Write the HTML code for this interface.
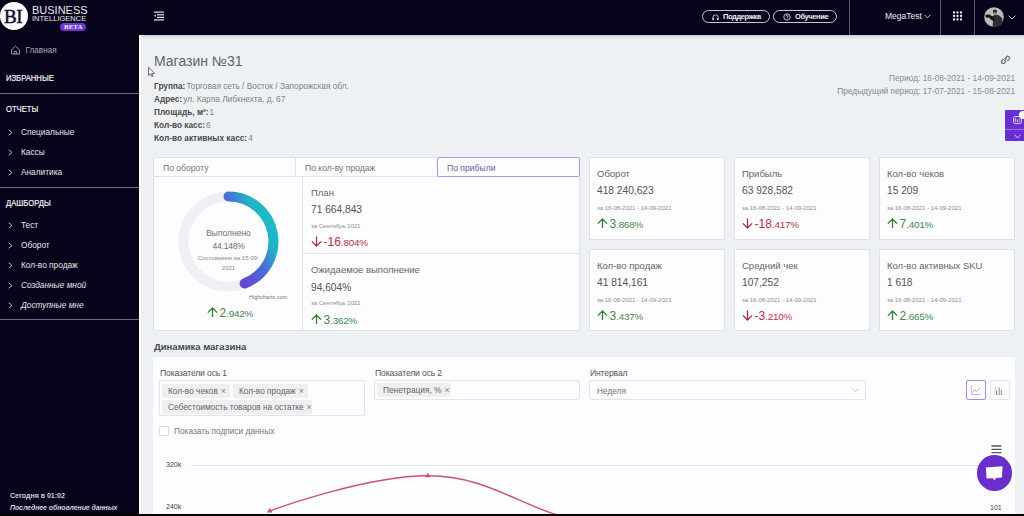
<!DOCTYPE html>
<html><head><meta charset="utf-8">
<style>
*{margin:0;padding:0;box-sizing:border-box}
html,body{width:1024px;height:516px;overflow:hidden}
body{position:relative;background:#eef1f4;font-family:"Liberation Sans",sans-serif;color:#555}
.a{position:absolute;white-space:nowrap;line-height:1}
#side{position:absolute;left:0;top:0;width:139px;height:516px;background:#07031a}
#side .edge{position:absolute;left:138px;top:35px;width:1px;height:481px;background:#010006}
#top{position:absolute;left:0;top:0;width:1024px;height:35px;background:#07031a}
#shadow{position:absolute;left:139px;top:35px;width:885px;height:6px;background:linear-gradient(#cfd1d4,#e7e9ec 50%,#eef1f4)}
#wstrip{position:absolute;left:139px;top:35px;width:2px;height:481px;background:#fbfbfc}
#bottom{position:absolute;left:0;top:514px;width:1024px;height:2px;background:#000}
.sb{color:#f2f0f6;-webkit-text-stroke:0.2px #f2f0f6;font-size:8.5px;transform:scaleX(0.9);transform-origin:0 0}
.si{color:#e6e3ea;font-size:8.3px}
.chev{position:absolute;width:4px;height:4px;border-right:1px solid #d8d4de;border-top:1px solid #d8d4de;transform:rotate(45deg)}
.hr{position:absolute;left:0;width:139px;height:1px;background:#6f6a7a}
.card{position:absolute;background:#fdfcfe;border:1px solid #e2e2e6}
.ttl{font-size:9.5px;color:#666}
.val{font-size:10.2px;color:#535353}
.per{font-size:6px;color:#8c8c8c}
.grn{color:#45884a}
.grn svg{color:#2e7d32}
.red svg{color:#a82a44}
.red{color:#b8304a}
.pill{position:absolute;height:13px;border:1px solid #c9c6d0;border-radius:7px}
.info{left:154px;font-size:8.3px;color:#818181}
.info b{color:#4a4a4a;margin-right:1px}
.per2{font-size:8.3px;color:#8a8a8a}
.tab{font-size:8.6px;color:#777}
.chg{position:absolute;white-space:nowrap;line-height:12px;font-size:12px}
.chg svg{position:absolute;left:0;top:-0.7px}
.chg span.t{position:absolute;left:12.5px;top:-0.7px}
.chg .s{font-size:9.9px;letter-spacing:-0.2px}
.lbl{font-size:8.6px;color:#555;letter-spacing:-0.15px}
.box{position:absolute;border:1px solid #e3e3e8;border-radius:2px;background:#fdfcfe}
.tag{position:absolute;height:14px;background:#efeff1;border-radius:2px;font-size:8.3px;color:#666;line-height:14px;padding-left:6px;white-space:nowrap}
.tag i{font-style:normal;color:#888;margin-left:3px;font-size:9px}
</style></head>
<body>
<div id="shadow"></div><div id="wstrip"></div>

<div class="a" style="left:154px;top:54px;font-size:14px;color:#626262">Магазин №31</div>
<div class="a info" style="top:82px"><b>Группа:</b>Торговая сеть / Восток / Запорожская обл.</div>
<div class="a info" style="top:95px"><b>Адрес:</b>ул. Карла Либкнехта, д. 67</div>
<div class="a info" style="top:108px"><b>Площадь, м²:</b>1</div>
<div class="a info" style="top:121px"><b>Кол-во касс:</b>6</div>
<div class="a info" style="top:134px"><b>Кол-во активных касс:</b>4</div>
<svg style="position:absolute;left:1000px;top:55px" width="11" height="10" viewBox="0 0 11 10"><g fill="none" stroke="#666" stroke-width="1.1"><path d="M4.6 3.6 L6.4 1.8 A1.6 1.6 0 0 1 8.9 4.3 L7.3 5.9"/><path d="M6.2 6.2 L4.4 8 A1.6 1.6 0 0 1 1.9 5.5 L3.6 3.9"/><path d="M4.3 5.8 L6.7 3.4"/></g></svg>
<div class="a per2" style="right:9px;top:74px">Период: 16-08-2021 - 14-09-2021</div>
<div class="a per2" style="right:9px;top:87px">Предыдущий период: 17-07-2021 - 15-08-2021</div>
<div style="position:absolute;left:1005px;top:110px;width:19px;height:31px;background:#6a2fd4;border-radius:1px 0 0 1px"></div>
<div style="position:absolute;left:1005px;top:129px;width:19px;height:1px;background:#9a78e0"></div>
<svg style="position:absolute;left:1012.5px;top:116px" width="9" height="8" viewBox="0 0 9 8"><rect x="0.6" y="0.6" width="7.8" height="6.8" rx="1" fill="none" stroke="#dcd0f7" stroke-width="1"/><path d="M2.6 2 V6 M4.5 3.5 V6 M6.3 2.5 V6 M2 4 H3.2" stroke="#dcd0f7" stroke-width="0.8"/></svg>
<div style="position:absolute;left:1019px;top:111px;width:8px;height:8px;border-radius:50%;background:#fff"></div>
<svg style="position:absolute;left:1014px;top:133.5px" width="7" height="5" viewBox="0 0 7 5"><path d="M0.5 0.6 L3.5 4 L6.5 0.6" fill="none" stroke="#e6dcfa" stroke-width="0.9"/></svg>


<div class="card" style="left:153px;top:157px;width:427px;height:174px"></div>
<div style="position:absolute;left:154px;top:176px;width:425px;height:1px;background:#e4e4e8"></div>
<div style="position:absolute;left:295px;top:158px;width:1px;height:18px;background:#e4e4e8"></div>
<div style="position:absolute;left:437px;top:157px;width:143px;height:20px;border:1px solid #b393ec;border-radius:2px;background:#fdfcfe"></div>
<div class="a tab" style="left:163px;top:164px">По обороту</div>
<div class="a tab" style="left:305px;top:164px">По кол-ву продаж</div>
<div class="a tab" style="left:447px;top:164px;color:#6f5aa8">По прибыли</div>
<div style="position:absolute;left:302px;top:177px;width:1px;height:153px;background:#e4e4e8"></div>
<div style="position:absolute;left:303px;top:253px;width:276px;height:1px;background:#e2e2e6"></div>
<svg style="position:absolute;left:173px;top:186px" width="112" height="112" viewBox="0 0 112 112">
  <defs><linearGradient id="dg" x1="0" y1="1" x2="1" y2="0"><stop offset="0" stop-color="#6b3cd3"/><stop offset="0.22" stop-color="#5d4ed4"/><stop offset="0.5" stop-color="#4870d8"/><stop offset="0.7" stop-color="#22b3c8"/><stop offset="1" stop-color="#17c5c0"/></linearGradient></defs>
  <circle cx="55.5" cy="55.5" r="45" fill="none" stroke="#f0eff3" stroke-width="10"/>
  <path d="M55.5 10.5 A45 45 0 0 1 71.6 97.5" fill="none" stroke="url(#dg)" stroke-width="10" stroke-linecap="round"/>
</svg>
<div class="a" style="left:0;width:457px;text-align:center;top:229px;font-size:8.5px;color:#6f6f6f">Выполнено</div>
<div class="a" style="left:0;width:457px;text-align:center;top:242px;font-size:8.5px;color:#6f6f6f;letter-spacing:-0.2px">44.148%</div>
<div class="a" style="left:0;width:457px;text-align:center;top:255px;font-size:6px;color:#888">Состоянием на 15-09-</div>
<div class="a" style="left:0;width:457px;text-align:center;top:265px;font-size:6px;color:#888">2021</div>
<div class="a" style="left:249px;top:295px;font-size:5.5px;color:#777">Highcharts.com</div>

<div class="chg grn" style="left:207px;top:307.3px"><svg width="11" height="11" viewBox="0 0 11 11"><path d="M5.5 10 V1.4 M0.9 5.6 L5.5 1 L10.1 5.6" fill="none" stroke="currentColor" stroke-width="1.25"/></svg><span class="t">2<span class="s">.942%</span></span></div>

<div class="a ttl" style="left:311px;top:188px">План</div>
<div class="a val" style="left:311px;top:205px">71 664,843</div>
<div class="a per" style="left:311px;top:223px">за Сентябрь 2021</div>
<div class="a ttl" style="left:311px;top:265px">Ожидаемое выполнение</div>
<div class="a val" style="left:311px;top:283px">94,604%</div>
<div class="a per" style="left:311px;top:300px">за Сентябрь 2021</div>

<div class="chg red" style="left:311px;top:236.2px"><svg width="11" height="11" viewBox="0 0 11 11"><path d="M5.5 0.5 V9.6 M0.9 5.4 L5.5 10 L10.1 5.4" fill="none" stroke="currentColor" stroke-width="1.25"/></svg><span class="t">-16<span class="s">.804%</span></span></div>
<div class="chg grn" style="left:311px;top:314.2px"><svg width="11" height="11" viewBox="0 0 11 11"><path d="M5.5 10 V1.4 M0.9 5.6 L5.5 1 L10.1 5.6" fill="none" stroke="currentColor" stroke-width="1.25"/></svg><span class="t">3<span class="s">.362%</span></span></div>
<div class="card" style="left:589px;top:157px;width:136px;height:83px"></div>
<div class="a ttl" style="left:597px;top:169px">Оборот</div>
<div class="a val" style="left:597px;top:186px">418 240,623</div>
<div class="a per" style="left:597px;top:205px">за 16-08-2021 - 14-09-2021</div>
<div class="chg grn" style="left:597px;top:218.5px"><svg width="11" height="11" viewBox="0 0 11 11"><path d="M5.5 10 V1.4 M0.9 5.6 L5.5 1 L10.1 5.6" fill="none" stroke="currentColor" stroke-width="1.25"/></svg><span class="t">3<span class="s">.868%</span></span></div>
<div class="card" style="left:734px;top:157px;width:136px;height:83px"></div>
<div class="a ttl" style="left:742px;top:169px">Прибыль</div>
<div class="a val" style="left:742px;top:186px">63 928,582</div>
<div class="a per" style="left:742px;top:205px">за 16-08-2021 - 14-09-2021</div>
<div class="chg red" style="left:742px;top:218.5px"><svg width="11" height="11" viewBox="0 0 11 11"><path d="M5.5 0.5 V9.6 M0.9 5.4 L5.5 10 L10.1 5.4" fill="none" stroke="currentColor" stroke-width="1.25"/></svg><span class="t">-18<span class="s">.417%</span></span></div>
<div class="card" style="left:879px;top:157px;width:136px;height:83px"></div>
<div class="a ttl" style="left:887px;top:169px">Кол-во чеков</div>
<div class="a val" style="left:887px;top:186px">15 209</div>
<div class="a per" style="left:887px;top:205px">за 16-08-2021 - 14-09-2021</div>
<div class="chg grn" style="left:887px;top:218.5px"><svg width="11" height="11" viewBox="0 0 11 11"><path d="M5.5 10 V1.4 M0.9 5.6 L5.5 1 L10.1 5.6" fill="none" stroke="currentColor" stroke-width="1.25"/></svg><span class="t">7<span class="s">.401%</span></span></div>
<div class="card" style="left:589px;top:249px;width:136px;height:82px"></div>
<div class="a ttl" style="left:597px;top:261px">Кол-во продаж</div>
<div class="a val" style="left:597px;top:278px">41 814,161</div>
<div class="a per" style="left:597px;top:297px">за 16-08-2021 - 14-09-2021</div>
<div class="chg grn" style="left:597px;top:310.5px"><svg width="11" height="11" viewBox="0 0 11 11"><path d="M5.5 10 V1.4 M0.9 5.6 L5.5 1 L10.1 5.6" fill="none" stroke="currentColor" stroke-width="1.25"/></svg><span class="t">3<span class="s">.437%</span></span></div>
<div class="card" style="left:734px;top:249px;width:136px;height:82px"></div>
<div class="a ttl" style="left:742px;top:261px">Средний чек</div>
<div class="a val" style="left:742px;top:278px">107,252</div>
<div class="a per" style="left:742px;top:297px">за 16-08-2021 - 14-09-2021</div>
<div class="chg red" style="left:742px;top:310.5px"><svg width="11" height="11" viewBox="0 0 11 11"><path d="M5.5 0.5 V9.6 M0.9 5.4 L5.5 10 L10.1 5.4" fill="none" stroke="currentColor" stroke-width="1.25"/></svg><span class="t">-3<span class="s">.210%</span></span></div>
<div class="card" style="left:879px;top:249px;width:136px;height:82px"></div>
<div class="a ttl" style="left:887px;top:261px">Кол-во активных SKU</div>
<div class="a val" style="left:887px;top:278px">1 618</div>
<div class="a per" style="left:887px;top:297px">за 16-08-2021 - 14-09-2021</div>
<div class="chg grn" style="left:887px;top:310.5px"><svg width="11" height="11" viewBox="0 0 11 11"><path d="M5.5 10 V1.4 M0.9 5.6 L5.5 1 L10.1 5.6" fill="none" stroke="currentColor" stroke-width="1.25"/></svg><span class="t">2<span class="s">.665%</span></span></div>

<div class="a" style="left:154px;top:342px;font-size:9.5px;font-weight:bold;color:#4a4a4a">Динамика магазина</div>
<div style="position:absolute;left:153px;top:357px;width:862px;height:157px;background:#fdfcfe"></div>
<div class="a lbl" style="left:160px;top:369px">Показатели ось 1</div>
<div class="box" style="left:159px;top:380px;width:206px;height:36px"></div>
<div class="tag" style="left:162px;top:384px;width:68px">Кол-во чеков<i>×</i></div>
<div class="tag" style="left:233px;top:384px;width:75px">Кол-во продаж<i>×</i></div>
<div class="tag" style="left:162px;top:400px;width:150px">Себестоимость товаров на остатке<i>×</i></div>
<div class="a lbl" style="left:375px;top:369px">Показатели ось 2</div>
<div class="box" style="left:374px;top:380px;width:206px;height:20px"></div>
<div class="tag" style="left:377px;top:383px;width:74px">Пенетрация, %<i>×</i></div>
<div class="a lbl" style="left:590px;top:369px">Интервал</div>
<div class="box" style="left:589px;top:380px;width:277px;height:20px"></div>
<div class="a" style="left:597px;top:387px;font-size:8.3px;color:#747474">Неделя</div>
<svg style="position:absolute;left:852px;top:388px" width="7" height="5" viewBox="0 0 7 5"><path d="M0.5 0.6 L3.5 3.8 L6.5 0.6" fill="none" stroke="#b5b5b8" stroke-width="0.8"/></svg>
<div style="position:absolute;left:966px;top:380px;width:20px;height:20px;border:1px solid #a987e8;border-radius:2px"></div>
<svg style="position:absolute;left:970px;top:384px" width="12" height="12" viewBox="0 0 12 12"><path d="M1.5 1.5 V10.5 H10.5" fill="none" stroke="#b9a6de" stroke-width="0.8"/><path d="M2.5 8.5 L5 6 L6.5 7.5 L10 4" fill="none" stroke="#9f85d6" stroke-width="0.8"/></svg>
<div style="position:absolute;left:990px;top:380px;width:20px;height:20px;border:1px solid #e6e6ea;border-radius:2px"></div>
<svg style="position:absolute;left:990px;top:380px" width="20" height="20" viewBox="0 0 20 20"><path d="M5.2 6.5 V14.5 H13.8" fill="none" stroke="#c4c4c8" stroke-width="0.7"/><rect x="6" y="10.3" width="1" height="4.2" fill="#8f8f93"/><rect x="8.6" y="7.4" width="1.1" height="7.1" fill="#8f8f93"/><rect x="10.8" y="9.9" width="1" height="4.6" fill="#8f8f93"/></svg>
<div style="position:absolute;left:159px;top:426px;width:10px;height:10px;border:1px solid #dcdce0;border-radius:1px;background:#fff"></div>
<div class="a" style="left:174px;top:427px;font-size:8.3px;color:#777">Показать подписи данных</div>
<div class="a" style="left:166px;top:461px;font-size:7px;color:#444">320k</div>
<div class="a" style="left:166px;top:503px;font-size:7px;color:#444">240k</div>
<div class="a" style="left:990px;top:504px;font-size:7px;color:#444">101</div>
<div style="position:absolute;left:191px;top:465px;width:790px;height:1px;background:#e2e6ea"></div>
<svg style="position:absolute;left:0;top:0" width="1024" height="516" viewBox="0 0 1024 516">
  <path d="M269.7 511 C269.7 511 364.5 475.8 427.7 475.8 C490.9 475.8 522.5 510 585.7 523 C650 536 700 540 743 540" fill="none" stroke="#cc5170" stroke-width="1.4"/>
  <path d="M269.7 508 L272.5 512.5 L266.9 512.5 Z M427.7 472.8 L430.5 477.3 L424.9 477.3 Z" fill="#cc5170"/>
</svg>
<svg style="position:absolute;left:991px;top:445px" width="11" height="9" viewBox="0 0 11 9"><path d="M0.5 1 H10.5 M0.5 4.3 H10.5 M0.5 7.6 H10.5" stroke="#555" stroke-width="1.3"/></svg>
<div style="position:absolute;left:976.5px;top:455.3px;width:35.5px;height:35.5px;border-radius:50%;background:#6b2dcc"></div>
<svg style="position:absolute;left:985px;top:465px" width="19" height="17" viewBox="0 0 19 17"><path d="M1 2.5 L17.5 1.2 L17 12.5 L11 13 L9.5 15.5 L8 13.2 L1.5 13.5 Z" fill="#fff"/></svg>

<div id="side">
  <div class="edge"></div>
  <svg style="position:absolute;left:10px;top:45px" width="11" height="10" viewBox="0 0 11 10"><path d="M1.5 4.8 L5.5 1.2 L9.5 4.8 V9 H1.5 Z M4.3 9 V6.5 H6.7 V9" fill="none" stroke="#aba7b5" stroke-width="0.9"/></svg>
  <div class="a si" style="left:25.5px;top:46.6px;color:#aba7b5;font-size:8.2px">Главная</div>
  <div class="a sb" style="left:6px;top:74px">ИЗБРАННЫЕ</div>
  <div class="hr" style="top:93px"></div>
  <div class="a sb" style="left:6px;top:105px">ОТЧЕТЫ</div>
<svg style="position:absolute;left:7.5px;top:128.5px" width="5" height="7" viewBox="0 0 5 7"><path d="M0.7 0.8 L4 3.5 L0.7 6.2" fill="none" stroke="#dcd8e2" stroke-width="0.85"/></svg><div class="a si" style="left:21px;top:128px">Специальные</div>
<svg style="position:absolute;left:7.5px;top:148.5px" width="5" height="7" viewBox="0 0 5 7"><path d="M0.7 0.8 L4 3.5 L0.7 6.2" fill="none" stroke="#dcd8e2" stroke-width="0.85"/></svg><div class="a si" style="left:21px;top:148px">Кассы</div>
<svg style="position:absolute;left:7.5px;top:168.5px" width="5" height="7" viewBox="0 0 5 7"><path d="M0.7 0.8 L4 3.5 L0.7 6.2" fill="none" stroke="#dcd8e2" stroke-width="0.85"/></svg><div class="a si" style="left:21px;top:168px">Аналитика</div>
<div class="hr" style="top:187px"></div><div class="a sb" style="left:6px;top:199px">ДАШБОРДЫ</div>
<svg style="position:absolute;left:7.5px;top:221.5px" width="5" height="7" viewBox="0 0 5 7"><path d="M0.7 0.8 L4 3.5 L0.7 6.2" fill="none" stroke="#dcd8e2" stroke-width="0.85"/></svg><div class="a si" style="left:21px;top:221px">Тест</div>
<svg style="position:absolute;left:7.5px;top:241.5px" width="5" height="7" viewBox="0 0 5 7"><path d="M0.7 0.8 L4 3.5 L0.7 6.2" fill="none" stroke="#dcd8e2" stroke-width="0.85"/></svg><div class="a si" style="left:21px;top:241px">Оборот</div>
<svg style="position:absolute;left:7.5px;top:261.5px" width="5" height="7" viewBox="0 0 5 7"><path d="M0.7 0.8 L4 3.5 L0.7 6.2" fill="none" stroke="#dcd8e2" stroke-width="0.85"/></svg><div class="a si" style="left:21px;top:261px">Кол-во продаж</div>
<svg style="position:absolute;left:7.5px;top:281.5px" width="5" height="7" viewBox="0 0 5 7"><path d="M0.7 0.8 L4 3.5 L0.7 6.2" fill="none" stroke="#dcd8e2" stroke-width="0.85"/></svg><div class="a si" style="left:21px;top:281px;font-style:italic">Созданные мной</div>
<svg style="position:absolute;left:7.5px;top:301.5px" width="5" height="7" viewBox="0 0 5 7"><path d="M0.7 0.8 L4 3.5 L0.7 6.2" fill="none" stroke="#dcd8e2" stroke-width="0.85"/></svg><div class="a si" style="left:21px;top:301px;font-style:italic">Доступные мне</div>
<div class="hr" style="top:319px"></div>
  <div class="a" style="left:10px;top:492px;font-size:7px;font-weight:bold;color:#d6d2dc">Сегодня в 01:02</div>
  <div class="a" style="left:10px;top:504px;font-size:7px;font-weight:bold;font-style:italic;color:#d6d2dc;letter-spacing:-0.1px">Последнее обновление данных</div>
</div>
<div id="top">
  <div style="position:absolute;left:0;top:2px;width:28px;height:28px;border-radius:50%;background:#fbfafc"></div>
  <div class="a" style="left:4px;top:7px;font-family:'Liberation Serif',serif;font-weight:normal;font-size:19px;color:#170d2e;letter-spacing:-0.5px;-webkit-text-stroke:0.5px #170d2e">BI</div>
  <div class="a" style="left:32px;top:5px;font-size:11px;color:#e9e7ee">BUSINESS</div>
  <div class="a" style="left:32px;top:15px;font-size:7.5px;color:#e9e7ee">INTELLIGENCE</div>
  <div style="position:absolute;left:60px;top:23px;width:26px;height:8px;border-radius:4px;background:#6d35d2"></div>
  <div class="a" style="left:64px;top:24px;font-family:'Liberation Serif',serif;font-weight:bold;font-size:7px;color:#f2ecff">BETA</div>
  <svg style="position:absolute;left:153px;top:10px" width="12" height="12" viewBox="0 0 12 12">
    <rect x="1" y="1.5" width="10" height="1.2" fill="#e8e6ee"/>
    <rect x="4" y="4.2" width="7" height="1.2" fill="#e8e6ee"/>
    <rect x="4" y="6.8" width="7" height="1.2" fill="#e8e6ee"/>
    <rect x="1" y="9.3" width="10" height="1.2" fill="#e8e6ee"/>
    <path d="M1 5.7 L3 4.5 L3 7 Z" fill="#e8e6ee"/>
  </svg>
  <div class="pill" style="left:702px;top:10px;width:68px"></div>
  <div class="a" style="left:723px;top:13px;font-size:7.5px;font-weight:bold;color:#f0eef4;letter-spacing:-0.4px">Поддержка</div>
  <svg style="position:absolute;left:711.5px;top:13.5px" width="7" height="7" viewBox="0 0 8 8"><path d="M1 6 V4 A3 3 0 0 1 7 4 V6" fill="none" stroke="#eee" stroke-width="0.9"/><rect x="0.6" y="4.5" width="1.6" height="2.6" rx="0.5" fill="#eee"/><rect x="5.8" y="4.5" width="1.6" height="2.6" rx="0.5" fill="#eee"/></svg>
  <div class="pill" style="left:773px;top:10px;width:64px"></div>
  <svg style="position:absolute;left:782.5px;top:12.5px" width="8" height="8" viewBox="0 0 9 9"><circle cx="4.5" cy="4.5" r="3.6" fill="none" stroke="#eee" stroke-width="0.9"/><path d="M3.4 3.6 A1.1 1.1 0 1 1 4.6 4.7 V5.4" fill="none" stroke="#eee" stroke-width="0.8"/><circle cx="4.6" cy="6.4" r="0.45" fill="#eee"/></svg>
  <div class="a" style="left:795px;top:13px;font-size:7.5px;font-weight:bold;color:#f0eef4;letter-spacing:-0.4px">Обучение</div>
  <div style="position:absolute;left:849px;top:0;width:1px;height:35px;background:#5e596c"></div>
  <div class="a" style="left:885px;top:12px;font-size:8.5px;color:#ecebf0">MegaTest</div>
  <svg style="position:absolute;left:924px;top:14px" width="7" height="5" viewBox="0 0 7 5"><path d="M0.6 0.8 L3.5 3.8 L6.4 0.8" fill="none" stroke="#dedbe6" stroke-width="0.9"/></svg>
  <div style="position:absolute;left:940px;top:0;width:1px;height:35px;background:#5e596c"></div>
  <svg style="position:absolute;left:952px;top:11px" width="11" height="11" viewBox="0 0 11 11">
    <g fill="#f4f3f7"><circle cx="2" cy="1.5" r="1.15"/><circle cx="5.5" cy="1.5" r="1.15"/><circle cx="9" cy="1.5" r="1.15"/>
    <circle cx="2" cy="5" r="1.15"/><circle cx="5.5" cy="5" r="1.15"/><circle cx="9" cy="5" r="1.15"/>
    <circle cx="2" cy="8.5" r="1.15"/><circle cx="5.5" cy="8.5" r="1.15"/><circle cx="9" cy="8.5" r="1.15"/></g>
  </svg>
  <div style="position:absolute;left:974px;top:0;width:1px;height:35px;background:#5e596c"></div>
  <svg style="position:absolute;left:984px;top:6.5px" width="20" height="20" viewBox="0 0 20 20">
    <defs><clipPath id="av"><circle cx="10" cy="10" r="9.8"/></clipPath></defs>
    <g clip-path="url(#av)"><rect width="20" height="20" fill="#bcbbbf"/>
    <path d="M8.5 20 L9.2 13 L8 9.5 L11 7.8 L14.5 8 L18 11 L19.5 20 Z" fill="#2e2e31"/>
    <path d="M1 8.8 L3 7.4 L5.5 7.6 L8.5 9.6 L11.2 11.5 L10.5 14 L8 13.5 L5 10.8 L2 10.6 Z" fill="#18181a"/>
    <circle cx="11" cy="4.6" r="2.1" fill="#2a2424"/>
    <ellipse cx="11" cy="6.3" rx="1.8" ry="1.4" fill="#9a7070"/>
    <path d="M12 15 L13 20 L10 20 Z" fill="#3b3b3e"/></g>
  </svg>
  <svg style="position:absolute;left:1008px;top:15px" width="8" height="5" viewBox="0 0 8 5"><path d="M0.6 0.6 L4 4 L7.4 0.6" fill="none" stroke="#dedbe6" stroke-width="0.9"/></svg>
</div>
<svg style="position:absolute;left:0;top:0" width="200" height="100" viewBox="0 0 200 100"><path d="M148.6 67.4 L148.6 75.4 L150.6 73.7 L152 76.6 L153.1 76.1 L151.8 73.4 L154.6 73.3 Z" fill="#fff" stroke="#555" stroke-width="0.9" stroke-linejoin="round"/></svg><div id="bottom"></div>
</body></html>
